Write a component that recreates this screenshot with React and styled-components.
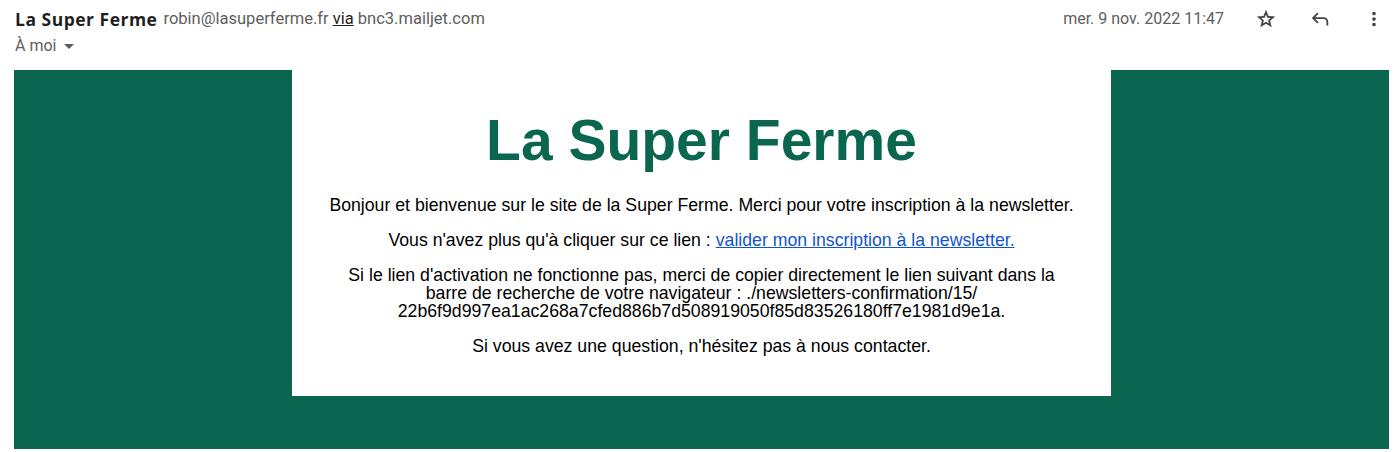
import React from 'react';
import styled, { createGlobalStyle } from 'styled-components';

const GlobalStyle = createGlobalStyle`
  body {
    margin: 0;
    background: #ffffff;
    font-family: Roboto, "Liberation Sans", Arial, sans-serif;
  }
`;

const Page = styled.div`
  width: 1395px;
  height: 452px;
  overflow: hidden;
`;

const Header = styled.div`
  padding: 1px 1px 0 15px;
`;

const TopRow = styled.div`
  display: flex;
  align-items: center;
  height: 36px;
`;

const Sender = styled.span`
  font-family: "Open Sans", Roboto, sans-serif;
  font-size: 17.5px;
  letter-spacing: 0.5px;
  line-height: 20px;
  font-weight: 700;
  color: #1f1f1f;
`;

const Address = styled.span`
  margin-left: 6px;
  font-size: 16.5px;
  line-height: 20px;
  color: #5e5e5e;
  white-space: nowrap;
`;

const Via = styled.span`
  color: #1f1f1f;
  text-decoration: underline;
`;

const Spacer = styled.div`
  flex: 1;
`;

const DateText = styled.span`
  font-size: 16px;
  line-height: 20px;
  color: #5e5e5e;
  margin-right: 22px;
`;

const IconButton = styled.div`
  width: 40px;
  height: 36px;
  display: flex;
  align-items: center;
  justify-content: center;
  color: #444746;
  & + & {
    margin-left: 14px;
  }
`;

const Recipient = styled.div`
  display: flex;
  align-items: center;
  height: 20px;
  margin: -1px 0 14px;
  font-size: 16px;
  line-height: 20px;
  color: #5e5e5e;
`;

const Caret = styled.span`
  margin-left: 8px;
  width: 0;
  height: 0;
  border-left: 5px solid transparent;
  border-right: 5px solid transparent;
  border-top: 5px solid #5e5e5e;
`;

const Mail = styled.div`
  margin: 0 6px 0 14px;
  height: 379px;
  background: #0b6650;
  display: flex;
  justify-content: center;
  align-items: flex-start;
  font-family: "Liberation Sans", Arial, sans-serif;
`;

const Card = styled.div`
  width: 819px;
  box-sizing: border-box;
  background: #ffffff;
  padding: 37px 35px 41px;
  text-align: center;
  color: #000000;
`;

const Title = styled.h1`
  margin: 0 0 23px;
  font-size: 57px;
  font-weight: 700;
  color: #0b6650;
`;

const Para = styled.p`
  margin: 0 0 17px;
  font-size: 17.7px;
  line-height: 18px;
  &:last-child {
    margin-bottom: 0;
  }
`;

const Link = styled.a`
  color: #1155cc;
  text-decoration: underline;
`;

const StarIcon = () => (
  <svg width="22" height="22" viewBox="0 -960 960 960" fill="currentColor">
    <path d="m354-287 126-76 126 77-33-144 111-96-146-13-58-136-58 135-146 13 111 97-33 143ZM233-120l65-281L80-590l288-25 112-265 112 265 288 25-218 189 65 281-247-149-247 149Z" />
  </svg>
);

const ReplyIcon = () => (
  <svg width="22" height="22" viewBox="0 -960 960 960" fill="currentColor">
    <path d="M760-200v-160q0-50-35-85t-85-35H273l144 144-57 56-240-240 240-240 57 56-144 144h367q83 0 141.5 58.5T840-360v160h-80Z" />
  </svg>
);

const MoreIcon = () => (
  <svg width="22" height="22" viewBox="0 -960 960 960" fill="currentColor">
    <path d="M480-160q-33 0-56.5-23.5T400-240q0-33 23.5-56.5T480-320q33 0 56.5 23.5T560-240q0 33-23.5 56.5T480-160Zm0-240q-33 0-56.5-23.5T400-480q0-33 23.5-56.5T480-560q33 0 56.5 23.5T560-480q0 33-23.5 56.5T480-400Zm0-240q-33 0-56.5-23.5T400-720q0-33 23.5-56.5T480-800q33 0 56.5 23.5T560-720q0 33-23.5 56.5T480-640Z" />
  </svg>
);

export default function App() {
  return (
    <Page>
      <GlobalStyle />
      <Header>
        <TopRow>
          <Sender>La Super Ferme</Sender>
          <Address>
            robin@lasuperferme.fr <Via>via</Via> bnc3.mailjet.com
          </Address>
          <Spacer />
          <DateText>mer. 9 nov. 2022 11:47</DateText>
          <IconButton><StarIcon /></IconButton>
          <IconButton><ReplyIcon /></IconButton>
          <IconButton><MoreIcon /></IconButton>
        </TopRow>
        <Recipient>
          À moi
          <Caret />
        </Recipient>
      </Header>
      <Mail>
        <Card>
          <Title>La Super Ferme</Title>
          <Para>
            Bonjour et bienvenue sur le site de la Super Ferme. Merci pour votre inscription à la newsletter.
          </Para>
          <Para>
            Vous n'avez plus qu'à cliquer sur ce lien :{' '}
            <Link href="#">valider mon inscription à la newsletter.</Link>
          </Para>
          <Para>
            Si le lien d'activation ne fonctionne pas, merci de copier directement le lien suivant dans la barre de
            recherche de votre navigateur : ./newsletters&#8209;confirmation/15/<wbr />22b6f9d997ea1ac268a7cfed886b7d508919050f85d83526180ff7e1981d9e1a.
          </Para>
          <Para>Si vous avez une question, n'hésitez pas à nous contacter.</Para>
        </Card>
      </Mail>
    </Page>
  );
}
